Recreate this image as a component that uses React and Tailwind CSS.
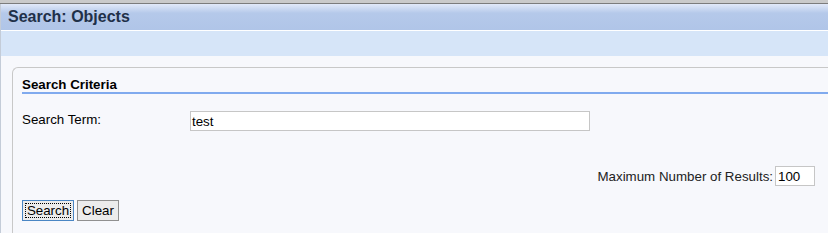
export default function App() {
  return (
    <div className="w-[828px] h-[233px] overflow-hidden bg-[#f7f8fc] font-['Liberation_Sans',Arial,sans-serif] text-[13.33px] text-black">
      <div className="h-[3px] bg-[#cacaca]" />
      <div className="h-px bg-[#7c7c7c]" />
      <div className="border-l border-[#c4ccd8]">
        <div className="h-[26px] bg-[linear-gradient(to_bottom,#e2e9f9_0%,#b5c9ea_35%,#b0c5e8_100%)] pl-[7px] flex items-center">
          <span className="text-[16px] font-bold leading-[18px] text-[#1f3049]">Search: Objects</span>
        </div>
        <div className="h-px bg-white" />
        <div className="h-[25px] bg-[#d6e5f8]" />
        <div className="pl-[11px] pt-[11px]">
          <div className="h-[200px] border-l border-t border-[#c8c8c8] rounded-tl-[6px] pl-[9px]">
            <div className="pt-[9px] leading-[15px] font-bold border-b-2 border-[#80aaee]">Search Criteria</div>
            <div className="mt-[17px] flex items-start">
              <div className="w-[168px] leading-[15px] mt-[1px]">Search Term:</div>
              <div className="w-[400px] h-[20px] bg-white border border-[#c6c6c6] pl-px flex items-center leading-[15px]">test</div>
            </div>
            <div className="mt-[35px] pr-[13px] flex justify-end items-center gap-[2px]">
              <span className="leading-[15px] text-[#222]">Maximum Number of Results:</span>
              <div className="w-[40px] h-[20px] bg-white border border-[#c6c6c6] pl-[2px] flex items-center leading-[15px]">100</div>
            </div>
            <div className="mt-[14px] flex gap-[3px]">
              <button className="w-[52px] h-[21px] bg-[#ececec] border border-[#4a86c4] p-[2px] flex">
                <span className="flex-1 border border-dotted border-black flex items-center justify-center leading-[15px]">Search</span>
              </button>
              <button className="w-[42px] h-[21px] bg-[#ececec] border border-[#909090] flex items-center justify-center leading-[15px]">Clear</button>
            </div>
          </div>
        </div>
      </div>
    </div>
  );
}
